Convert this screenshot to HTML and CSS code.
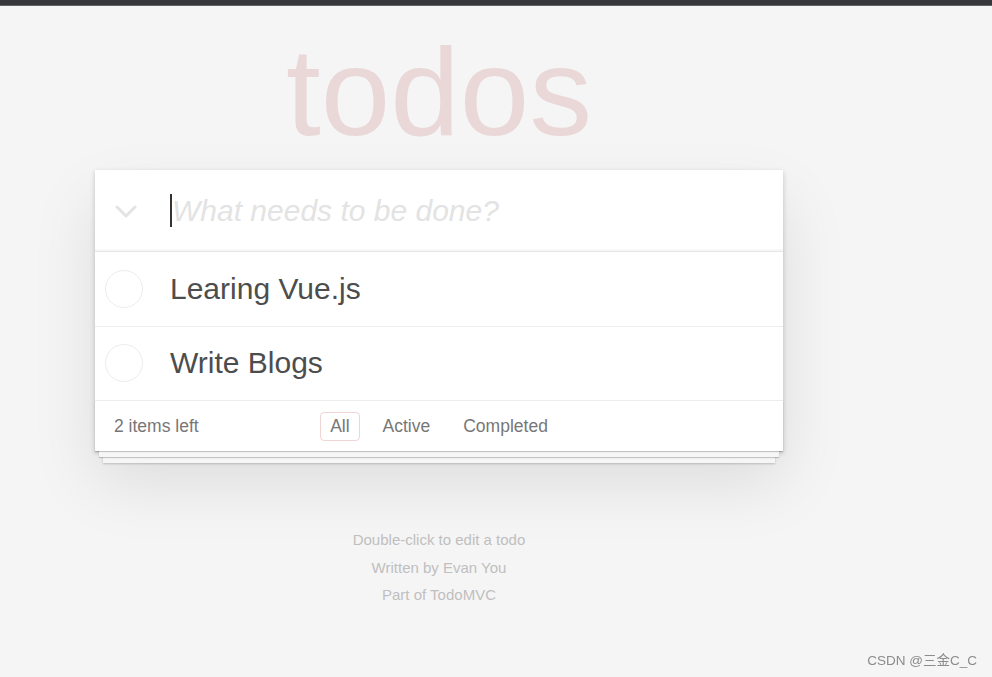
FILE: index.html
```html
<!DOCTYPE html>
<html lang="en">
<head>
    <meta charset="UTF-8">
    <meta name="viewport" content="width=device-width, initial-scale=1.0">
    <title>Vue.js • TodoMVC</title>
    <link rel="stylesheet" href="styles.css">
</head>
<body>
    <div class="topbar"></div>

    <div class="page">
        <h1 class="title">todos</h1>

        <!-- 主體 -->
        <section class="todoapp">
            <header class="header">
                <span class="toggle-all">
                    <svg width="22" height="14" viewBox="0 0 22 14">
                        <polyline points="2,2 11,11 20,2" fill="none" stroke="#e3e3e3" stroke-width="3" stroke-linecap="round" stroke-linejoin="round"/>
                    </svg>
                </span>
                <div class="new-todo">
                    <span class="caret"></span>
                    <span class="placeholder">What needs to be done?</span>
                </div>
            </header>

            <section class="main">
                <ul class="todo-list">
                    <li>
                        <span class="toggle"></span>
                        <label>Learing Vue.js</label>
                    </li>
                    <li>
                        <span class="toggle"></span>
                        <label>Write Blogs</label>
                    </li>
                </ul>
            </section>

            <footer class="footer">
                <span class="todo-count"><strong>2</strong> items left</span>
                <ul class="filters">
                    <li><a href="#/all" class="selected">All</a></li>
                    <li><a href="#/active">Active</a></li>
                    <li><a href="#/completed">Completed</a></li>
                </ul>
                <span></span>
            </footer>
        </section>

        <!-- 說明 -->
        <footer class="info">
            <p>Double-click to edit a todo</p>
            <p>Written by <a href="#">Evan You</a></p>
            <p>Part of <a href="#">TodoMVC</a></p>
        </footer>
    </div>

    <div class="watermark">CSDN @三金C_C</div>
</body>
</html>
```

FILE: styles.css
```css
body {
    margin: 0;
    padding: 0;
    background: #f5f5f5;
    font-family: "Liberation Sans", Arial, sans-serif;
    color: #4d4d4d;
}

.topbar {
    height: 5px;
    background: #36373b;
    border-bottom: 1px solid #626367;
}

.page {
    width: 878px;
}

.title {
    margin: 23px 0 16px;
    font-size: 125px;
    line-height: 125px;
    font-weight: 100;
    text-align: center;
    color: rgba(175, 47, 47, 0.15);
}

.todoapp {
    position: relative;
    width: 688px;
    margin: 0 auto;
    background: #fff;
    box-shadow: 0 2px 5px 0 rgba(0, 0, 0, 0.2), 0 31px 62px 0 rgba(0, 0, 0, 0.1);
}

.header {
    display: flex;
    align-items: center;
    height: 81px;
    box-shadow: inset 0 -2px 1px rgba(0, 0, 0, 0.03);
}

.toggle-all {
    width: 55px;
    padding-left: 20px;
    display: flex;
    align-items: center;
    padding-top: 3px;
}

.new-todo {
    display: flex;
    align-items: center;
    font-size: 30px;
}

.caret {
    width: 2px;
    height: 33px;
    background: #333;
}

.placeholder {
    font-style: italic;
    color: #e3e3e3;
}

.main {
    border-top: 1px solid #e6e6e6;
}

.todo-list {
    list-style: none;
    margin: 0;
    padding: 0;
}

.todo-list li {
    display: flex;
    align-items: center;
    border-bottom: 1px solid #ededed;
    font-size: 30px;
}

.toggle {
    box-sizing: border-box;
    width: 38px;
    height: 38px;
    margin: 0 27px 0 10px;
    border: 1.5px solid #ededed;
    border-radius: 50%;
}

.todo-list label {
    padding: 18.75px 19px 18.75px 0;
    line-height: 1.2;
    color: #4d4d4d;
}

.footer {
    position: relative;
    display: grid;
    grid-template-columns: 1fr auto 1fr;
    align-items: center;
    height: 50px;
    padding: 0 19px;
    color: #777;
    font-size: 17.5px;
}

/* 下方疊紙效果 */
.footer::before {
    content: '';
    position: absolute;
    right: 0;
    bottom: 0;
    left: 0;
    height: 50px;
    overflow: hidden;
    box-shadow: 0 1px 1px rgba(0, 0, 0, 0.2),
                0 10px 0 -4px #f6f6f6,
                0 11px 1px -4px rgba(0, 0, 0, 0.2),
                0 20px 0 -8px #f6f6f6,
                0 21px 2px -8px rgba(0, 0, 0, 0.2);
}

.todo-count strong {
    font-weight: 300;
}

.filters {
    display: flex;
    gap: 13px;
    list-style: none;
    margin: 0;
    padding: 0;
    position: relative;
}

.filters a {
    display: block;
    padding: 4px 9px;
    line-height: 19px;
    color: #777;
    text-decoration: none;
    border: 1px solid transparent;
    border-radius: 4px;
}

.filters a.selected {
    border-color: rgba(175, 47, 47, 0.2);
}

.info {
    margin: 81px auto 0;
    color: #bfbfbf;
    font-size: 15px;
    text-align: center;
}

.info p {
    margin: 12.5px 0;
    line-height: 15px;
}

.info a {
    color: inherit;
    text-decoration: none;
}

.watermark {
    position: fixed;
    right: 15px;
    bottom: 8px;
    font-family: "Liberation Sans", "Noto Sans CJK SC", sans-serif;
    font-size: 13.5px;
    color: #8c8c8c;
}
```
